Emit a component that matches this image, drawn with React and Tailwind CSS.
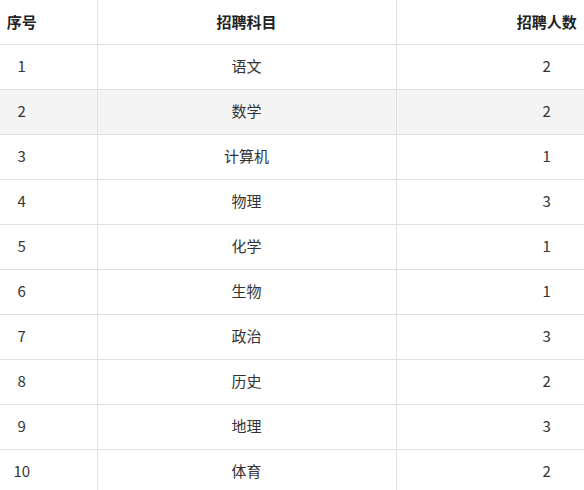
import React from "react";

const rows = [
  ["1", "语文", "2"],
  ["2", "数学", "2"],
  ["3", "计算机", "1"],
  ["4", "物理", "3"],
  ["5", "化学", "1"],
  ["6", "生物", "1"],
  ["7", "政治", "3"],
  ["8", "历史", "2"],
  ["9", "地理", "3"],
  ["10", "体育", "2"],
];

export default function App() {
  return (
    <div
      className="w-[584px] h-[490px] overflow-hidden bg-white text-[#333] text-[15px]"
      style={{ fontFamily: '"Noto Sans CJK SC", "Noto Sans", sans-serif' }}
    >
      <table className="ml-[-53px] border-collapse table-fixed w-[750px]">
        <colgroup>
          <col className="w-[150px]" />
          <col className="w-[299px]" />
          <col className="w-[301px]" />
        </colgroup>
        <thead>
          <tr className="h-[44px]">
            <th className="border-b border-r border-[#e0e0e0] font-bold text-center p-0 text-[#222]">序号</th>
            <th className="border-b border-r border-[#e0e0e0] font-bold text-center p-0 text-[#222]">招聘科目</th>
            <th className="border-b border-[#e0e0e0] font-bold text-center p-0 text-[#222]">招聘人数</th>
          </tr>
        </thead>
        <tbody>
          {rows.map((r, i) => (
            <tr key={i} className={`h-[45px] ${i === 1 ? "bg-[#f4f4f4]" : ""}`}>
              <td className="border-b border-r border-[#e0e0e0] text-center p-0">{r[0]}</td>
              <td className="border-b border-r border-[#e0e0e0] text-center p-0">{r[1]}</td>
              <td className="border-b border-[#e0e0e0] text-center p-0">{r[2]}</td>
            </tr>
          ))}
        </tbody>
      </table>
    </div>
  );
}
